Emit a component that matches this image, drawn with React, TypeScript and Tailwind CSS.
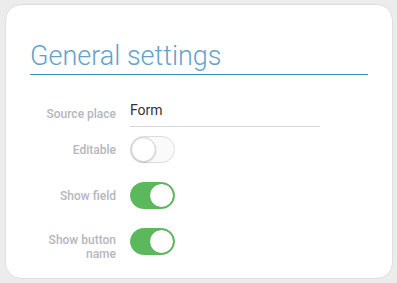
import { useState } from "react";

type ToggleProps = {
  checked: boolean;
  onChange: (value: boolean) => void;
};

function Toggle({ checked, onChange }: ToggleProps) {
  return (
    <button
      type="button"
      role="switch"
      aria-checked={checked}
      onClick={() => onChange(!checked)}
      className={
        checked
          ? "relative h-[27px] w-[45px] shrink-0 rounded-full border border-[#5cb85c] bg-[#5cb85c]"
          : "relative h-[27px] w-[45px] shrink-0 rounded-full border border-[#dcdcdc] bg-[#fafafa]"
      }
    >
      <span
        className={
          checked
            ? "absolute top-[0px] left-[18px] h-[25px] w-[25px] rounded-full border border-[#4ea64e] bg-white"
            : "absolute top-[0px] left-[0px] h-[25px] w-[25px] rounded-full border border-[#cfcfcf] bg-white shadow-[0_1px_2px_rgba(0,0,0,0.15)]"
        }
      />
    </button>
  );
}

function Row({ label, children, alignTop }: { label: string; children: React.ReactNode; alignTop?: boolean }) {
  return (
    <div className={alignTop ? "flex items-start gap-[14px]" : "flex items-center gap-[14px]"}>
      <div
        className={
          alignTop
            ? "w-[86px] pt-[5px] text-right text-[12px] leading-[14px] font-medium text-[#b6b6bd]"
            : "w-[86px] text-right text-[12px] leading-[14px] font-medium text-[#b6b6bd]"
        }
      >
        {label}
      </div>
      {children}
    </div>
  );
}

export default function App() {
  const [editable, setEditable] = useState(false);
  const [showField, setShowField] = useState(true);
  const [showButtonName, setShowButtonName] = useState(true);

  return (
    <div
      className="h-[283px] w-[397px] bg-[#ececec] pt-[4px] pl-[5px]"
      style={{ fontFamily: "Roboto, 'Noto Sans', sans-serif" }}
    >
      <div className="h-[275px] w-[388px] rounded-[16px] border border-[#dedede] bg-white px-[24px] pt-[35px]">
        <h2 className="border-b-[1.5px] border-[#3b8fb8] pb-[2px] text-[27px] leading-[32px] font-light text-[#64a2c9]">
          General settings
        </h2>

        <div className="mt-[26px] flex flex-col">
          <Row label="Source place">
            <div className="w-[190px] border-b border-[#d6d6d6] pb-[7px] text-[14px] leading-[18px] text-[#333]">
              Form
            </div>
          </Row>
          <div className="mt-[9px]">
            <Row label="Editable">
              <Toggle checked={editable} onChange={setEditable} />
            </Row>
          </div>
          <div className="mt-[19px]">
            <Row label="Show field">
              <Toggle checked={showField} onChange={setShowField} />
            </Row>
          </div>
          <div className="mt-[19px]">
            <Row label="Show button name" alignTop>
              <Toggle checked={showButtonName} onChange={setShowButtonName} />
            </Row>
          </div>
        </div>
      </div>
    </div>
  );
}
